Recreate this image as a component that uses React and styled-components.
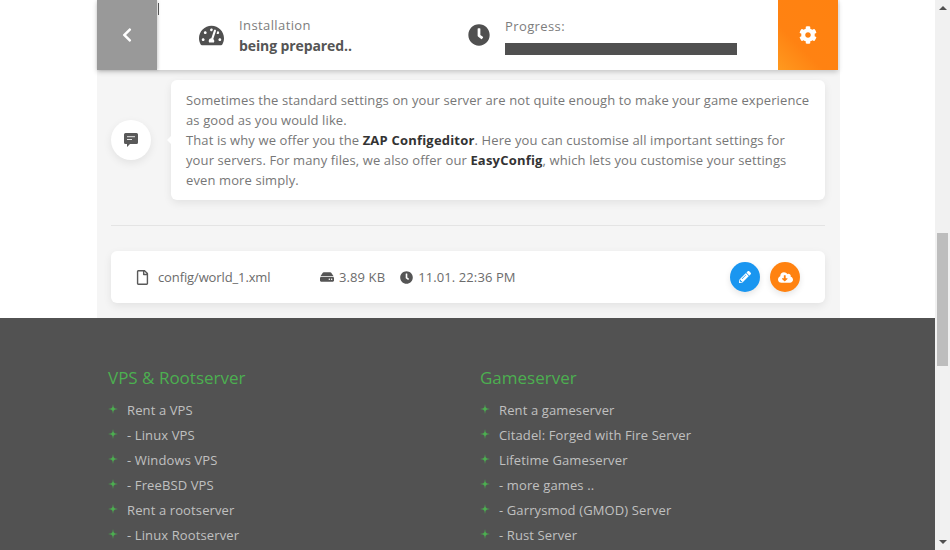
import React from "react";
import styled, { createGlobalStyle } from "styled-components";
import { FaChevronLeft, FaTachometerAlt, FaClock, FaCog, FaRegFile, FaHdd, FaPencilAlt, FaCloudDownloadAlt } from "react-icons/fa";

const Global = createGlobalStyle`
  html, body { margin: 0; height: 100%; overflow: hidden; background: #fff; }
  * { box-sizing: border-box; }
  body { font-family: "Open Sans", "Liberation Sans", sans-serif; font-size: 13px; color: #666; }
`;

const Viewport = styled.div`
  display: flex;
  height: 550px;
  overflow: hidden;
`;
const Page = styled.div`
  width: 935px;
  flex: none;
  display: flex;
  flex-direction: column;
`;
const Scrollbar = styled.div`
  width: 15px;
  flex: none;
  background: #f1f1f1;
  display: flex;
  flex-direction: column;
  align-items: center;
  justify-content: space-between;
  position: relative;
  padding: 6px 0;
`;
const ScrollArrow = styled.div`
  width: 0;
  height: 0;
  border-left: 4px solid transparent;
  border-right: 4px solid transparent;
  ${p => p.$down ? "border-top: 4px solid #505050;" : "border-bottom: 4px solid #505050;"}
`;
const Thumb = styled.div`
  position: absolute;
  left: 2px;
  top: 233px;
  width: 11px;
  height: 133px;
  background: #bdbdbd;
`;
const Panel = styled.main`
  width: 743px;
  margin-left: 97px;
  height: 318px;
  flex: none;
  background: #f5f5f5;
  display: flex;
  flex-direction: column;
`;
const TopBar = styled.header`
  width: 741px;
  height: 70px;
  flex: none;
  background: #fff;
  display: flex;
  align-items: stretch;
  box-shadow: 0 2px 5px rgba(0,0,0,.2);
  position: relative;
`;
const BackButton = styled.div`
  width: 60px;
  flex: none;
  background: #999;
  color: #fff;
  display: flex;
  align-items: center;
  justify-content: center;
  font-size: 16px;
  box-shadow: 1px 0 3px rgba(0,0,0,.2);
`;
const Cursor = styled.span`
  position: absolute;
  left: 61px;
  top: 3px;
  width: 1px;
  height: 12px;
  background: #555;
`;
const Status = styled.div`
  display: flex;
  align-items: center;
  gap: 15px;
  width: ${p => p.$w}px;
  padding-left: ${p => p.$pl}px;
  flex: none;
  color: #505050;
`;
const StatusIcon = styled.span`
  display: flex;
  font-size: ${p => p.$size}px;
  color: #505050;
`;
const StatusBody = styled.div`
  display: flex;
  flex-direction: column;
  flex: 1;
  padding-top: 3px;
`;
const StatusLabel = styled.span`
  font-size: 13px;
  line-height: 18px;
  letter-spacing: .4px;
  color: #7d7d7d;
`;
const StatusValue = styled.strong`
  font-size: 14px;
  line-height: 22px;
  margin-top: 1px;
  font-weight: 700;
  letter-spacing: -.1px;
  color: #555;
`;
const ProgressBar = styled.div`
  width: 232px;
  height: 12px;
  margin: 8px 0 1px;
  background: #505050;
`;
const GearButton = styled.div`
  width: 60px;
  margin-left: auto;
  flex: none;
  background: linear-gradient(45deg, #ff9a1f 0%, #ff8212 35%, #ff8210 100%);
  color: #fff;
  display: flex;
  align-items: center;
  justify-content: center;
  font-size: 18px;
`;
const Content = styled.div`
  padding: 10px 15px 0 14px;
  display: flex;
  flex-direction: column;
`;
const MessageRow = styled.div`
  display: flex;
  align-items: center;
  gap: 20px;
`;
const Bubble = styled.div`
  width: 40px;
  height: 40px;
  flex: none;
  border-radius: 50%;
  background: #fff;
  color: #595959;
  display: flex;
  align-items: center;
  justify-content: center;
  box-shadow: 0 3px 8px rgba(0,0,0,.08);
`;
const Message = styled.div`
  flex: 1;
  height: 120px;
  padding: 10px 15px;
  background: #fff;
  border-radius: 6px;
  font-size: 13px;
  line-height: 20px;
  letter-spacing: .11px;
  color: #777;
  box-shadow: 0 3px 8px rgba(0,0,0,.08);
  position: relative;
  &::before {
    content: "";
    position: absolute;
    left: -4px;
    top: 56px;
    border-top: 4px solid transparent;
    border-bottom: 4px solid transparent;
    border-right: 4px solid #fff;
  }
  strong { color: #333; font-weight: 700; letter-spacing: .2px; }
`;
const Divider = styled.hr`
  margin: 25px 0;
  border: 0;
  border-top: 1px solid #e4e4e4;
  height: 0;
`;
const FileRow = styled.div`
  height: 52px;
  background: #fff;
  border-radius: 6px;
  box-shadow: 0 3px 8px rgba(0,0,0,.08);
  display: flex;
  align-items: center;
  padding: 0 25px 0 24px;
  color: #6c6c6c;
  font-size: 13px;
`;
const FileName = styled.span`
  display: flex;
  align-items: center;
  gap: 8px;
  width: 185px;
  flex: none;
  letter-spacing: -.12px;
  svg { font-size: 15px; color: #595959; }
`;
const Meta = styled.span`
  display: flex;
  align-items: center;
  gap: 5px;
  margin-right: 15px;
  letter-spacing: .1px;
  svg { font-size: 14px; color: #555; }
`;
const Actions = styled.div`
  margin-left: auto;
  display: flex;
  gap: 10px;
`;
const RoundButton = styled.div`
  width: 30px;
  height: 30px;
  border-radius: 50%;
  background: ${p => p.$bg};
  color: #fff;
  display: flex;
  align-items: center;
  justify-content: center;
  font-size: ${p => p.$size}px;
  box-shadow: 0 3px 6px rgba(0,0,0,.1);
`;
const Footer = styled.footer`
  flex: 1;
  background: #525252;
  display: grid;
  grid-template-columns: 372px 1fr;
  padding: 50px 0 0 108px;
`;
const Column = styled.section`
  display: flex;
  flex-direction: column;
`;
const ColumnTitle = styled.h4`
  margin: 0 0 9px;
  font-size: 17px;
  line-height: 20px;
  font-weight: 400;
  color: #4caf50;
`;
const LinkList = styled.ul`
  list-style: none;
  margin: 0;
  padding: 0;
`;
const LinkItem = styled.li`
  display: flex;
  align-items: center;
  gap: 9px;
  height: 25px;
  font-size: 13px;
  letter-spacing: .12px;
  color: #c0c0c0;
  svg { flex: none; margin-top: -1px; }
`;

const Bullet = () => (
  <svg width="10" height="10" viewBox="0 0 10 10">
    <path d="M5 0 L5.9 4.1 L10 5 L5.9 5.9 L5 10 L4.1 5.9 L0 5 L4.1 4.1 Z" fill="#4caf50" opacity=".75" />
    <circle cx="5" cy="5" r="1.7" fill="#4caf50" />
  </svg>
);

const CommentIcon = () => (
  <svg width="14" height="14" viewBox="0 0 14 14">
    <path d="M1.5 0 H12.5 A1.5 1.5 0 0 1 14 1.5 V9.5 A1.5 1.5 0 0 1 12.5 11 H6 L3 14 V11 H1.5 A1.5 1.5 0 0 1 0 9.5 V1.5 A1.5 1.5 0 0 1 1.5 0 Z" fill="currentColor" />
    <rect x="3" y="3.2" width="8" height="1" fill="#fff" opacity=".85" />
    <rect x="3" y="6" width="5" height="1" fill="#fff" opacity=".85" />
  </svg>
);

const columns = [
  { title: "VPS & Rootserver", links: ["Rent a VPS", "- Linux VPS", "- Windows VPS", "- FreeBSD VPS", "Rent a rootserver", "- Linux Rootserver"] },
  { title: "Gameserver", links: ["Rent a gameserver", "Citadel: Forged with Fire Server", "Lifetime Gameserver", "- more games ..", "- Garrysmod (GMOD) Server", "- Rust Server"] },
];

export default function App() {
  return (
    <Viewport>
      <Global />
      <Page>
        <Panel>
          <TopBar>
            <BackButton><FaChevronLeft /></BackButton>
            <Cursor />
            <Status $w={288} $pl={42}>
              <StatusIcon $size={25}><FaTachometerAlt /></StatusIcon>
              <StatusBody>
                <StatusLabel>Installation</StatusLabel>
                <StatusValue>being prepared..</StatusValue>
              </StatusBody>
            </Status>
            <Status $w={290} $pl={23}>
              <StatusIcon $size={22}><FaClock /></StatusIcon>
              <StatusBody>
                <StatusLabel>Progress:</StatusLabel>
                <ProgressBar />
              </StatusBody>
            </Status>
            <GearButton><FaCog /></GearButton>
          </TopBar>
          <Content>
            <MessageRow>
              <Bubble><CommentIcon /></Bubble>
              <Message>
                Sometimes the standard settings on your server are not quite enough to make your game experience as good as you would like.<br />
                That is why we offer you the <strong>ZAP Configeditor</strong>. Here you can customise all important settings for your servers. For many files, we also offer our <strong>EasyConfig</strong>, which lets you customise your settings even more simply.
              </Message>
            </MessageRow>
            <Divider />
            <FileRow>
              <FileName><FaRegFile />config/world_1.xml</FileName>
              <Meta><FaHdd />3.89 KB</Meta>
              <Meta><FaClock size={13} />11.01. 22:36 PM</Meta>
              <Actions>
                <RoundButton $bg="#1a96f0" $size={12}><FaPencilAlt /></RoundButton>
                <RoundButton $bg="#ff8210" $size={15}><FaCloudDownloadAlt /></RoundButton>
              </Actions>
            </FileRow>
          </Content>
        </Panel>
        <Footer>
          {columns.map(col => (
            <Column key={col.title}>
              <ColumnTitle>{col.title}</ColumnTitle>
              <LinkList>
                {col.links.map(l => (
                  <LinkItem key={l}><Bullet />{l}</LinkItem>
                ))}
              </LinkList>
            </Column>
          ))}
        </Footer>
      </Page>
      <Scrollbar>
        <ScrollArrow />
        <Thumb />
        <ScrollArrow $down />
      </Scrollbar>
    </Viewport>
  );
}
